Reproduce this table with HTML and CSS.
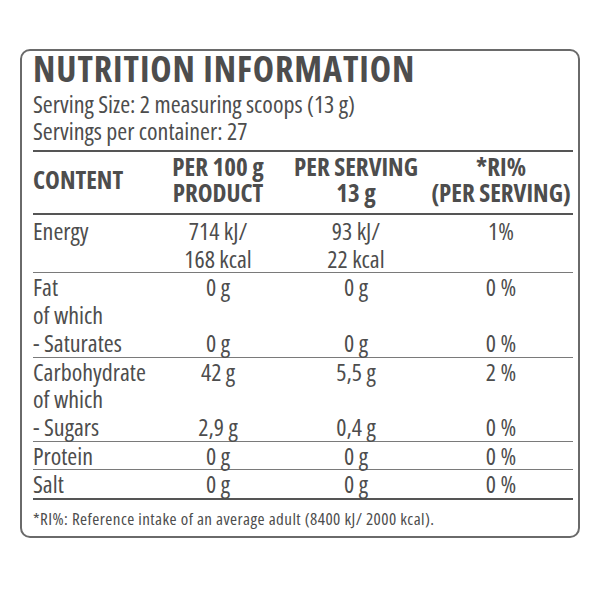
FILE: index.html
```html
<!DOCTYPE html>
<html lang="en">
<head>
<meta charset="utf-8">
<title>Nutrition Information</title>
<link rel="stylesheet" href="styles.css">
</head>
<body>
<section class="card">
  <h1 class="title">NUTRITION INFORMATION</h1>
  <div class="meta">
    <div>Serving Size: 2 measuring scoops (13 g)</div>
    <div>Servings per container: 27</div>
  </div>
  <div class="table">
    <div class="row head">
      <div class="cell name">CONTENT</div>
      <div class="cell">PER 100 g<br>PRODUCT</div>
      <div class="cell">PER SERVING<br>13 g</div>
      <div class="cell">*RI%<br>(PER SERVING)</div>
    </div>
    <div class="row energy">
      <div class="cell name">Energy</div>
      <div class="cell">714 kJ/<br>168 kcal</div>
      <div class="cell">93 kJ/<br>22 kcal</div>
      <div class="cell">1%</div>
    </div>
    <div class="row">
      <div class="cell name">Fat<br>of which<br>- Saturates</div>
      <div class="cell">0 g<br>&nbsp;<br>0 g</div>
      <div class="cell">0 g<br>&nbsp;<br>0 g</div>
      <div class="cell">0 %<br>&nbsp;<br>0 %</div>
    </div>
    <div class="row">
      <div class="cell name">Carbohydrate<br>of which<br>- Sugars</div>
      <div class="cell">42 g<br>&nbsp;<br>2,9 g</div>
      <div class="cell">5,5 g<br>&nbsp;<br>0,4 g</div>
      <div class="cell">2 %<br>&nbsp;<br>0 %</div>
    </div>
    <div class="row">
      <div class="cell name">Protein</div>
      <div class="cell">0 g</div>
      <div class="cell">0 g</div>
      <div class="cell">0 %</div>
    </div>
    <div class="row last">
      <div class="cell name">Salt</div>
      <div class="cell">0 g</div>
      <div class="cell">0 g</div>
      <div class="cell">0 %</div>
    </div>
  </div>
  <p class="note">*RI%: Reference intake of an average adult (8400 kJ/ 2000 kcal).</p>
</section>
</body>
</html>
```

FILE: styles.css
```css
html, body {
  margin: 0;
  padding: 0;
  background: #ffffff;
}

body {
  font-family: "Open Sans", "DejaVu Sans", sans-serif;
  font-stretch: 75%;
  color: #4d4d4d;
}

.card {
  margin: 49px 0 0 20px;
  width: 560px;
  box-sizing: border-box;
  border: 2px solid #6a6a6a;
  border-radius: 10px;
  padding: 0 5px 5px 11px;
}

.title {
  margin: 0;
  font-size: 36px;
  line-height: 36px;
  font-weight: 700;
  letter-spacing: 0.9px;
}

.meta {
  margin-top: 3px;
  padding-bottom: 6px;
  font-size: 24px;
  line-height: 27px;
}

.table {
  border-top: 2px solid #555555;
}

.row {
  display: grid;
  grid-template-columns: 120px 130px 146px 144px;
  font-size: 24px;
  line-height: 27.7px;
  border-bottom: 1px solid #7a7a7a;
}

.row.head {
  font-size: 25px;
  line-height: 26px;
  font-weight: 700;
  padding: 1px 0 8px;
  border-bottom: 2px solid #555555;
  align-items: center;
}

.row.energy {
  padding-top: 2px;
}

.row.last {
  border-bottom: 2px solid #555555;
}

.cell {
  text-align: center;
  white-space: nowrap;
}

.cell.name {
  text-align: left;
}

.note {
  margin: 7px 0 0;
  font-size: 17px;
  line-height: 24px;
  letter-spacing: 0.45px;
}
```
